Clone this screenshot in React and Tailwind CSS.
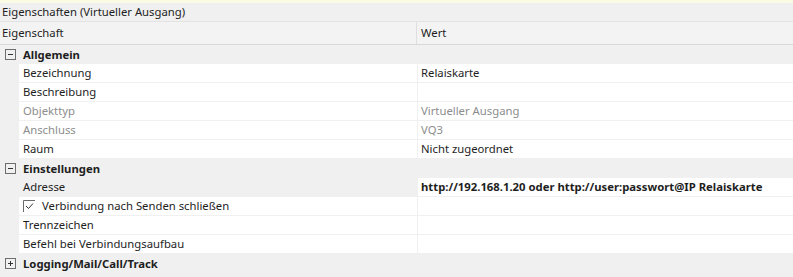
import React from "react";

const font = { fontFamily: '"Segoe UI", "Noto Sans", sans-serif' };

function Toggle({ open }) {
  return (
    <svg width="11" height="11" viewBox="0 0 11 11" className="shrink-0">
      <rect x="0.5" y="0.5" width="10" height="10" fill="none" stroke="#6e6e6e" />
      <line x1="3" y1="5.5" x2="8" y2="5.5" stroke="#333" />
      {!open && <line x1="5.5" y1="3" x2="5.5" y2="8" stroke="#333" />}
    </svg>
  );
}

function Category({ label, open }) {
  return (
    <div className="flex h-[19px] items-center bg-[#f0f0f0]">
      <div className="flex w-[23px] items-center pl-[5px]">
        <Toggle open={open} />
      </div>
      <span className="font-bold text-[#1e1e1e]">{label}</span>
    </div>
  );
}

function Prop({ label, value, disabled, boldValue, selected, check }) {
  const txt = disabled ? "text-[#8d8d8d]" : "text-[#1e1e1e]";
  return (
    <div className="flex h-[19px] bg-[#f0f0f0]">
      <div className="w-[19px] shrink-0" />
      <div
        className={`flex w-[398px] shrink-0 items-center border-b border-[#f0f0f0] pl-[4px] ${
          selected ? "bg-[#f0f0f0]" : "bg-white"
        } ${txt}`}
      >
        {check ? (
          <span className="flex items-center">
            <svg width="12" height="12" viewBox="0 0 12 12" className="mr-[7px]">
              <path d="M0.5 12 V0.5 H12" fill="none" stroke="#6a6a6a" />
              <path d="M3 6 L5.5 8.5 L10 3.5" fill="none" stroke="#333" strokeWidth="1" />
            </svg>
            {label}
          </span>
        ) : (
          label
        )}
      </div>
      <div
        className={`flex flex-1 items-center border-b border-l border-[#f0f0f0] bg-white pl-[3px] ${txt} ${
          boldValue ? "font-bold" : ""
        }`}
      >
        {value}
      </div>
    </div>
  );
}

export default function App() {
  return (
    <div className="h-[277px] w-[793px] overflow-hidden bg-[#f0f0f0] text-[11.3px] leading-none" style={font}>
      <div className="h-[3px] bg-[#fbfbe4]" />
      <div className="flex h-[19px] items-center border-b border-[#e3e3e3] pl-[2px] text-[#1e1e1e]">
        Eigenschaften (Virtueller Ausgang)
      </div>
      <div className="flex h-[23px] border-b border-[#d9d9d9] bg-[#f3f3f3] text-[#1e1e1e]">
        <div className="flex w-[417px] items-center border-r border-[#dedede] pl-[2px]">Eigenschaft</div>
        <div className="flex flex-1 items-center pl-[4px]">Wert</div>
      </div>
      <Category label="Allgemein" open />
      <Prop label="Bezeichnung" value="Relaiskarte" />
      <Prop label="Beschreibung" value="" />
      <Prop label="Objekttyp" value="Virtueller Ausgang" disabled />
      <Prop label="Anschluss" value="VQ3" disabled />
      <Prop label="Raum" value="Nicht zugeordnet" />
      <Category label="Einstellungen" open />
      <Prop label="Adresse" value="http://192.168.1.20 oder http://user:passwort@IP Relaiskarte" boldValue selected />
      <Prop label="Verbindung nach Senden schließen" value="" check />
      <Prop label="Trennzeichen" value="" />
      <Prop label="Befehl bei Verbindungsaufbau" value="" />
      <Category label="Logging/Mail/Call/Track" />
    </div>
  );
}
